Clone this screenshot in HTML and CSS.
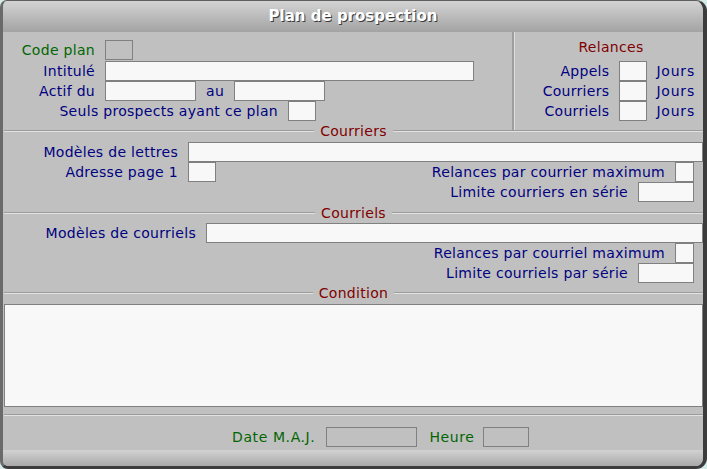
FILE: index.html
```html
<!DOCTYPE html>
<html lang="fr">
<head>
<meta charset="utf-8">
<title>Plan de prospection</title>
<link rel="stylesheet" href="styles.css">
</head>
<body>
<div class="window">
  <div class="titlebar">Plan de prospection</div>

  <div class="top">
    <div class="top-left">
      <div class="row first">
        <span class="lbl green w92">Code plan</span>
        <span class="box off w28"></span>
      </div>
      <div class="row">
        <span class="lbl w92">Intitulé</span>
        <span class="box w369"></span>
      </div>
      <div class="row">
        <span class="lbl w92">Actif du</span>
        <span class="box w91"></span>
        <span class="lbl mid">au</span>
        <span class="box w91"></span>
      </div>
      <div class="row">
        <span class="lbl w275">Seuls prospects ayant ce plan</span>
        <span class="box w28"></span>
      </div>
    </div>
    <div class="top-right">
      <div class="panel-title">Relances</div>
      <div class="relances">
        <span class="lbl">Appels</span><span class="box"></span><span class="unit">Jours</span>
        <span class="lbl">Courriers</span><span class="box"></span><span class="unit">Jours</span>
        <span class="lbl">Courriels</span><span class="box"></span><span class="unit">Jours</span>
      </div>
    </div>
  </div>

  <div class="sep"><span>Courriers</span></div>
  <div class="section courriers">
    <div class="row">
      <span class="lbl w175">Modèles de lettres</span>
      <span class="box grow"></span>
    </div>
    <div class="row">
      <span class="lbl w175">Adresse page 1</span>
      <span class="box w28"></span>
      <span class="spacer"></span>
      <span class="lbl">Relances par courrier maximum</span>
      <span class="box w19 end"></span>
    </div>
    <div class="row">
      <span class="spacer"></span>
      <span class="lbl">Limite courriers en série</span>
      <span class="box w56 end"></span>
    </div>
  </div>

  <div class="sep"><span>Courriels</span></div>
  <div class="section courriels">
    <div class="row">
      <span class="lbl w193">Modèles de courriels</span>
      <span class="box grow"></span>
    </div>
    <div class="row">
      <span class="spacer"></span>
      <span class="lbl">Relances par courriel maximum</span>
      <span class="box w19 end"></span>
    </div>
    <div class="row">
      <span class="spacer"></span>
      <span class="lbl">Limite courriels par série</span>
      <span class="box w56 end"></span>
    </div>
  </div>

  <div class="sep"><span>Condition</span></div>
  <div class="section condition">
    <div class="textarea"></div>
  </div>

  <div class="sep plain"></div>
  <div class="footer">
    <span class="lbl green">Date M.A.J.</span>
    <span class="box off w91"></span>
    <span class="lbl green heure">Heure</span>
    <span class="box off w46"></span>
  </div>
  <div class="bottombar"></div>
</div>
</body>
</html>
```

FILE: styles.css
```css
html, body {
  margin: 0;
  padding: 0;
}

body {
  background: #d5ebe8;
  font-family: "DejaVu Sans", Verdana, sans-serif;
  font-size: 14px;
  letter-spacing: 0.3px;
}

.window {
  width: 707px;
  height: 469px;
  box-sizing: border-box;
  border-style: solid;
  border-width: 1px 4px 3px 3px;
  border-color: #5e5e5e #3c3c3c #3c3c3c #6a6a6a;
  border-radius: 7px 11px 11px 8px;
  background: #c0c0c0;
  display: flex;
  flex-direction: column;
  overflow: hidden;
}

.titlebar {
  height: 31px;
  line-height: 31px;
  flex: none;
  background: linear-gradient(#d3d3d3, #a3a3a3);
  color: #ffffff;
  font-weight: bold;
  font-size: 15px;
  letter-spacing: 0;
  text-align: center;
  text-shadow: 1px 1px 0 #3a3a3a;
}

/* generic */
.row {
  display: flex;
  align-items: center;
  height: 20px;
}

.lbl {
  color: #000080;
  white-space: nowrap;
  text-align: right;
  margin-right: 10px;
  line-height: 20px;
}

.green { color: #006600; }

.box {
  display: block;
  height: 20px;
  box-sizing: border-box;
  border: 1px solid #808080;
  background: #f8f8f8;
  flex: none;
}

.box.off { background: transparent; }

.w19 { width: 19px; }
.w28 { width: 28px; }
.w46 { width: 46px; }
.w56 { width: 56px; }
.w91 { width: 91px; }
.w369 { width: 369px; }

.lbl.w92 { width: 92px; flex: none; }
.lbl.w175 { width: 175px; flex: none; }
.lbl.w193 { width: 193px; flex: none; }
.lbl.w275 { width: 275px; flex: none; }

.lbl.mid { margin-left: 10px; }

.grow { flex: 1; }
.spacer { flex: 1; }
.end { margin-right: 9px; }

/* top area */
.top {
  display: flex;
  height: 98px;
  flex: none;
}

.top-left {
  width: 511px;
  box-sizing: border-box;
  border-right: 2px solid #9e9e9e;
  padding-top: 8px;
}

.top-left .row.first { margin-bottom: 1px; }

.top-right {
  flex: 1;
  border-left: 1px solid #dedede;
  padding: 5px 8px 0 4px;
}

.panel-title {
  color: #800000;
  text-align: center;
  line-height: 20px;
  margin: 0 0 4px 8px;
}

.relances {
  display: grid;
  grid-template-columns: 1fr 28px auto;
  grid-auto-rows: 20px;
  align-items: center;
}

.relances .lbl { margin-right: 10px; }
.relances .unit {
  color: #000080;
  margin-left: 9px;
  line-height: 20px;
  letter-spacing: 0.8px;
}

/* separators */
.sep {
  display: flex;
  align-items: center;
  height: 2px;
  flex: none;
  margin: 0 0 0 1px;
}

.sep::before,
.sep::after {
  content: "";
  flex: 1;
  height: 2px;
  box-sizing: border-box;
  border-top: 1px solid #9c9c9c;
  border-bottom: 1px solid #e2e2e2;
}

.sep.plain::after { display: none; }

.sep span {
  color: #800000;
  padding: 0 6px;
  line-height: 16px;
  white-space: nowrap;
}

.section.courriers { padding: 10px 0; }
.section.courriels { padding: 9px 0; }
.section.condition { padding: 10px 0 7px 1px; }

.textarea {
  height: 103px;
  width: 699px;
  box-sizing: border-box;
  border: 1px solid #808080;
  background: #f8f8f8;
}

/* footer */
.footer {
  height: 34px;
  flex: none;
  box-sizing: border-box;
  padding: 11px 0 0 229px;
  display: flex;
  align-items: flex-start;
}

.footer .lbl { letter-spacing: 0.6px; }
.footer .heure { margin-left: 12px; }
.footer .w46 { margin-left: -1px; }
.footer .w91 { margin-left: 1px; }

.bottombar {
  flex: 1;
  background: linear-gradient(#d2d2d2, #a9a9a9);
}
```
